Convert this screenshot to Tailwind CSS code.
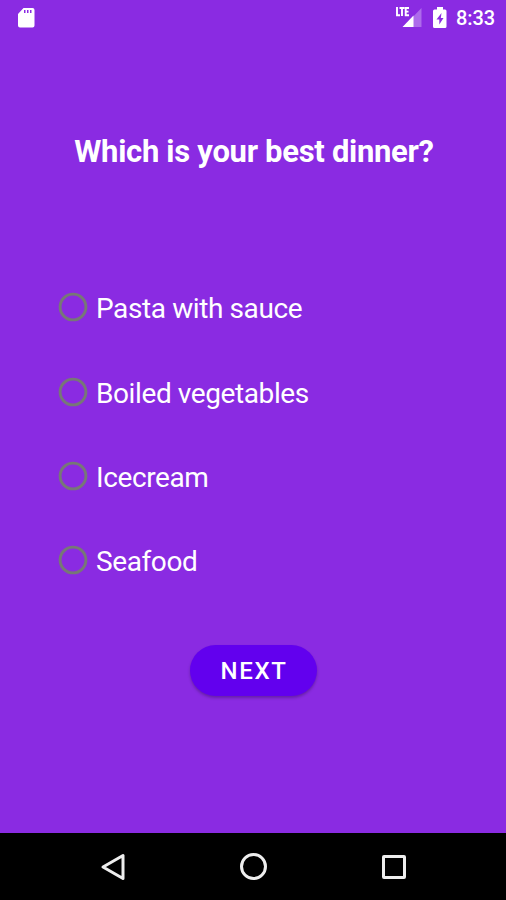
<!DOCTYPE html>
<html lang="en">
<head>
<meta charset="utf-8">
<title>Dinner quiz</title>
<script src="https://cdn.jsdelivr.net/npm/@tailwindcss/browser@4"></script>
</head>
<body class="w-[506px] h-[900px] overflow-hidden flex flex-col bg-[#8a2be2] text-white font-['Roboto',sans-serif]">
<header class="h-[36px] shrink-0 flex items-center pl-[17px] pr-[11px]">
  <svg class="w-[18px] h-[22px]" viewBox="0 0 18 22"><path fill="#fff" fill-rule="evenodd" d="M6.5 1H15.5Q17.500 1 17.500 3V18.500Q17.500 20.500 15.500 20.500H3Q1 20.500 1 18.500V7ZM7 3V6H8.500V3ZM10 3V6H11.500V3ZM13 3V6H14.500V3Z"/></svg>
  <div class="ml-auto flex items-center">
    <svg class="w-[28px] h-[24px]" viewBox="0 0 28 24"><path fill="#fff" fill-opacity=".3" d="M26.500 2V21H8Z"/><path fill="#fff" d="M18.500 9.500V21H7.500Z"/><path fill="none" stroke="#fff" stroke-width="1.900" d="M2 1V9.200H5M4.500 2H9.500M7 2V10M14 2H10.700V9.200H14M10.700 5.600H13.500"/></svg>
    <svg class="ml-[9px] w-[16px] h-[22px]" viewBox="0 0 16 22"><path fill="#fff" fill-rule="evenodd" d="M5 0H11V2.500H13Q14.500 2.500 14.500 4V19.500Q14.500 21 13 21H2.500Q1 21 1 19.500V4Q1 2.500 2.500 2.500H5ZM9.500 6L4.500 12.500H7.300V17.500L11.500 11H8.800Z"/></svg>
    <span class="ml-[8px] text-[20px] leading-[24px] font-medium tracking-[-0.100px]">8:33</span>
  </div>
</header>
<main class="flex-1 flex flex-col items-center">
  <h1 class="mt-[96px] h-[40px] pl-[2px] text-[31px] leading-[40px] font-bold tracking-[-0.300px] whitespace-nowrap">Which is your best dinner?</h1>
  <div class="w-full mt-[93px] pl-[58px] flex flex-col text-[28px] tracking-[-0.400px]">
    <div class="h-[84.400px] flex items-center gap-[8px]"><svg class="w-[30px] h-[30px]" viewBox="0 0 30 30"><circle cx="15" cy="15" r="12.900" fill="none" stroke="#777" stroke-width="2.900"/></svg><span class="pt-[4px]">Pasta with sauce</span></div>
    <div class="h-[84.400px] flex items-center gap-[8px]"><svg class="w-[30px] h-[30px]" viewBox="0 0 30 30"><circle cx="15" cy="15" r="12.900" fill="none" stroke="#777" stroke-width="2.900"/></svg><span class="pt-[4px]">Boiled vegetables</span></div>
    <div class="h-[84.400px] flex items-center gap-[8px]"><svg class="w-[30px] h-[30px]" viewBox="0 0 30 30"><circle cx="15" cy="15" r="12.900" fill="none" stroke="#777" stroke-width="2.900"/></svg><span class="pt-[4px]">Icecream</span></div>
    <div class="h-[84.400px] flex items-center gap-[8px]"><svg class="w-[30px] h-[30px]" viewBox="0 0 30 30"><circle cx="15" cy="15" r="12.900" fill="none" stroke="#777" stroke-width="2.900"/></svg><span class="pt-[4px]">Seafood</span></div>
  </div>
  <button class="mt-[42px] h-[51px] w-[127px] rounded-full bg-[#6200ee] text-[24px] font-medium tracking-[1.700px] pl-[2px] pt-[2px] shadow-[0_2px_3px_rgba(0,0,0,0.25)]">NEXT</button>
</main>
<nav class="h-[67px] shrink-0 bg-black flex items-center justify-between pl-[98px] pr-[97px]">
  <svg class="w-[30px] h-[30px]" viewBox="0 0 30 30"><path fill="none" stroke="#eee" stroke-width="3" stroke-linejoin="round" d="M25 3.500V26.500L5 15Z"/></svg>
  <svg class="w-[30px] h-[30px]" viewBox="0 0 30 30"><circle cx="14.500" cy="14.500" r="12" fill="none" stroke="#eee" stroke-width="3"/></svg>
  <svg class="w-[30px] h-[30px]" viewBox="0 0 30 30"><rect x="4.500" y="4.500" width="21" height="21" rx=".5" fill="none" stroke="#eee" stroke-width="3"/></svg>
</nav>
</body>
</html>
